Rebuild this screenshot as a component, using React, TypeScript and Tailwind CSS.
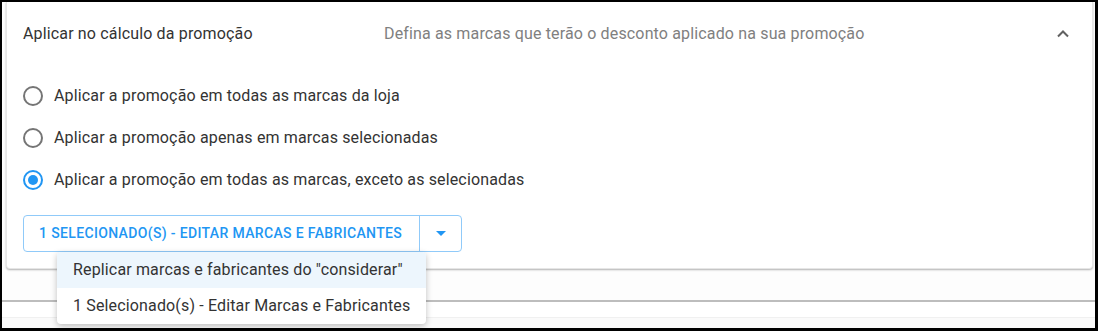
import React from "react";

function Radio({ checked }: { checked?: boolean }) {
  return (
    <span
      className={
        "flex h-[20px] w-[20px] shrink-0 items-center justify-center rounded-full border-2 " +
        (checked ? "border-[#2196f3]" : "border-[#757575]")
      }
    >
      {checked && <span className="h-[10px] w-[10px] rounded-full bg-[#2196f3]" />}
    </span>
  );
}

export default function App() {
  const options = [
    { label: "Aplicar a promoção em todas as marcas da loja", checked: false },
    { label: "Aplicar a promoção apenas em marcas selecionadas", checked: false },
    { label: "Aplicar a promoção em todas as marcas, exceto as selecionadas", checked: true },
  ];
  return (
    <div
      className="h-[331px] w-[1098px] overflow-hidden bg-black pb-[3px] pl-[2px] pr-[3px] pt-[2px]"
      style={{ fontFamily: "Roboto, 'Liberation Sans', sans-serif" }}
    >
      <div className="relative flex h-full w-full flex-col bg-[#fdfdfd]">
        <div className="ml-[4px] mr-[2px] rounded-b-[4px] bg-white shadow-[0_1px_2px_rgba(0,0,0,0.3)] border-x border-b border-[#e6e6e6]">
          <div className="flex h-[64px] items-center pl-[16px] pr-[20px] tracking-[0.15px]">
            <div className="w-[361px] text-[16px] text-[#333333]">Aplicar no cálculo da promoção</div>
            <div className="flex-1 text-[16px] text-[#808080]">
              Defina as marcas que terão o desconto aplicado na sua promoção
            </div>
            <svg width="14" height="10" viewBox="0 0 14 10" className="mr-[2px]">
              <path d="M2 7.5 L7 2.5 L12 7.5" fill="none" stroke="#616161" strokeWidth="2" />
            </svg>
          </div>
          <div className="flex flex-col pl-[16px] pt-[9px] tracking-[0.15px]">
            {options.map((o, i) => (
              <div key={i} className="flex h-[42px] items-center gap-[11px]">
                <Radio checked={o.checked} />
                <span className="text-[16px] text-[#333333]">{o.label}</span>
              </div>
            ))}
          </div>
          <div className="pb-[16px] pl-[16px] pt-[14px]">
            <div className="relative inline-flex h-[37px] rounded-[4px] border border-[#90caf9]">
              <div className="flex w-[395px] items-center pl-[15px] text-[14px] font-medium tracking-[0.025em] text-[#2196f3]">
                1 SELECIONADO(S) - EDITAR MARCAS E FABRICANTES
              </div>
              <div className="flex w-[42px] items-center justify-center border-l border-[#90caf9]">
                <svg width="10" height="5" viewBox="0 0 10 5">
                  <path d="M0 0 L10 0 L5 5 Z" fill="#2196f3" />
                </svg>
              </div>
              <div className="absolute left-[33px] top-[36px] z-10 w-[369px] overflow-hidden rounded-[4px] bg-white tracking-[0.15px] shadow-[0_2px_6px_rgba(0,0,0,0.25)]">
                <div className="flex h-[36px] items-center bg-[#edf6fd] pl-[16px] text-[16px] text-[#333333]">
                  Replicar marcas e fabricantes do "considerar"
                </div>
                <div className="flex h-[36px] items-center pl-[16px] text-[16px] text-[#333333]">
                  1 Selecionado(s) - Editar Marcas e Fabricantes
                </div>
              </div>
            </div>
          </div>
        </div>
        <div className="mt-[31px] h-[2px] w-full bg-[#bdbdbd]" />
        <div className="h-[15px] bg-white" />
        <div className="h-px bg-[#f0f0f0]" />
        <div className="flex-1 bg-[#fafafa]" />
      </div>
    </div>
  );
}
